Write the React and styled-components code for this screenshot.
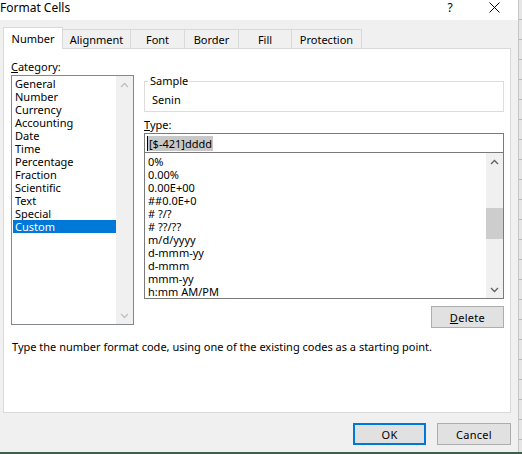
import React from 'react';
import styled, { createGlobalStyle } from 'styled-components';

const GlobalStyle = createGlobalStyle`
  html, body {
    margin: 0;
    padding: 0;
    background: #ffffff;
  }
  body {
    font-family: "Segoe UI", "Noto Sans", "Open Sans", sans-serif;
    font-size: 11px;
    color: #000000;
  }
`;

const Screen = styled.div`
  width: 522px;
  height: 454px;
  display: flex;
  flex-direction: column;
  overflow: hidden;
`;

const Main = styled.div`
  display: flex;
  flex: 1;
`;

const Dialog = styled.div`
  width: 518px;
  display: flex;
  flex-direction: column;
  background: #f0f0f0;
`;

const SheetEdge = styled.div`
  flex: 1;
  border-left: 1px solid #c6c6c6;
  background: repeating-linear-gradient(
    to bottom,
    #e6e6e6 0px,
    #e6e6e6 19px,
    #b9b9b9 19px,
    #b9b9b9 20px
  );
`;

const BottomStripe = styled.div`
  height: 2px;
  background: #3d5f4c;
`;

const TitleBar = styled.div`
  height: 20px;
  background: #ffffff;
  display: flex;
  align-items: flex-start;
`;

const Title = styled.span`
  font-size: 12px;
  line-height: 16px;
  flex: 1;
`;

const TitleButton = styled.span`
  width: ${(p) => p.$w}px;
  height: 15px;
  display: flex;
  justify-content: center;
  align-items: center;
  font-size: 12px;
`;

const TabRow = styled.div`
  height: 28px;
  display: flex;
  align-items: flex-end;
  padding-left: 3px;
`;

const Tab = styled.div`
  width: ${(p) => p.$w}px;
  height: ${(p) => (p.$active ? 22 : 19)}px;
  box-sizing: border-box;
  display: flex;
  align-items: center;
  justify-content: center;
  border: 1px solid #d9d9d9;
  border-bottom: none;
  border-left: ${(p) => (p.$first ? '1px solid #d9d9d9' : 'none')};
  background: ${(p) => (p.$active ? '#ffffff' : '#f0f0f0')};
  margin-bottom: ${(p) => (p.$active ? -1 : 0)}px;
  position: relative;
  z-index: ${(p) => (p.$active ? 1 : 0)};
  padding-top: ${(p) => (p.$active ? 0 : 1)}px;
`;

const Panel = styled.div`
  margin-left: 3px;
  width: 508px;
  height: 365px;
  box-sizing: border-box;
  background: #ffffff;
  border: 1px solid #d9d9d9;
  display: flex;
  flex-direction: column;
  padding: 10px 0 0 7px;
`;

const PanelColumns = styled.div`
  display: flex;
  gap: 10px;
`;

const LeftCol = styled.div`
  width: 123px;
  display: flex;
  flex-direction: column;
`;

const RightCol = styled.div`
  width: 360px;
  display: flex;
  flex-direction: column;
  padding-top: 22px;
`;

const Label = styled.div`
  height: 16px;
  line-height: 16px;
  margin-top: ${(p) => p.$top || 0}px;
  margin-bottom: ${(p) => p.$gap || 0}px;
`;

const Key = styled.span`
  text-decoration: underline;
`;

const ListBox = styled.div`
  height: ${(p) => p.$h}px;
  box-sizing: border-box;
  border: 1px solid ${(p) => p.$border || '#828790'};
  border-top: ${(p) => (p.$noTop ? 'none' : `1px solid ${p.$border || '#828790'}`)};
  background: #ffffff;
  display: flex;
`;

const ListItems = styled.div`
  flex: 1;
  padding: ${(p) => p.$top || 0}px 0 0 1px;
  display: flex;
  flex-direction: column;
`;

const ListItem = styled.div`
  height: 13px;
  line-height: 13px;
  padding-left: 2px;
  white-space: nowrap;
  background: ${(p) => (p.$selected ? '#0078d7' : 'transparent')};
  color: ${(p) => (p.$selected ? '#ffffff' : '#000000')};
`;

const ScrollBar = styled.div`
  width: 17px;
  background: #f0f0f0;
  display: flex;
  flex-direction: column;
`;

const ScrollArrow = styled.div`
  height: 17px;
  display: flex;
  align-items: center;
  justify-content: center;
  color: ${(p) => (p.$disabled ? '#bfbfbf' : '#606060')};
`;

const ScrollTrack = styled.div`
  flex: 1;
  display: flex;
  flex-direction: column;
`;

const ScrollThumb = styled.div`
  margin-top: ${(p) => p.$top}px;
  height: ${(p) => p.$h}px;
  background: #cdcdcd;
`;

const GroupBox = styled.div`
  height: 31px;
  box-sizing: border-box;
  border: 1px solid #dcdcdc;
  padding: 10px 0 0 7px;
  position: relative;
`;

const Legend = styled.span`
  position: absolute;
  top: -8px;
  left: 3px;
  padding: 0 1px 0 2px;
  background: #ffffff;
  line-height: 14px;
`;

const SampleText = styled.div`
  line-height: 16px;
`;

const TextInput = styled.div`
  height: 20px;
  box-sizing: border-box;
  border: 1px solid #7a7a7a;
  display: flex;
  align-items: center;
  padding-left: 2px;
`;

const Selection = styled.span`
  background: #c8c8c8;
  line-height: 15px;
  padding: 0 1px;
  border-left: 1px solid #000000;
`;

const ButtonRow = styled.div`
  display: flex;
  justify-content: flex-end;
  margin-top: ${(p) => p.$top || 0}px;
  gap: 11px;
`;

const Button = styled.div`
  width: ${(p) => p.$w || 73}px;
  height: 22px;
  box-sizing: border-box;
  border: ${(p) => (p.$default ? '2px solid #0078d7' : '1px solid #adadad')};
  background: #e1e1e1;
  display: flex;
  align-items: center;
  justify-content: center;
  letter-spacing: 0.3px;
`;

const Description = styled.div`
  margin-top: 11px;
  padding-left: 1px;
  line-height: 16px;
`;

const Footer = styled.div`
  flex: 1;
  display: flex;
  justify-content: flex-end;
  align-items: flex-start;
  padding: 10px 7px 0 0;
`;

const Chevron = ({ up }) => (
  <svg width="9" height="6" viewBox="0 0 9 6">
    <path
      d={up ? 'M1 5 L4.5 1.5 L8 5' : 'M1 1 L4.5 4.5 L8 1'}
      fill="none"
      stroke="currentColor"
      strokeWidth="1.3"
    />
  </svg>
);

const CloseIcon = () => (
  <svg width="11" height="11" viewBox="0 0 11 11">
    <path d="M0.5 0.5 L10.5 10.5 M10.5 0.5 L0.5 10.5" stroke="#000" strokeWidth="1" />
  </svg>
);

const categories = [
  'General', 'Number', 'Currency', 'Accounting', 'Date', 'Time',
  'Percentage', 'Fraction', 'Scientific', 'Text', 'Special', 'Custom',
];

const formats = [
  '0%', '0.00%', '0.00E+00', '##0.0E+0', '# ?/?', '# ??/??',
  'm/d/yyyy', 'd-mmm-yy', 'd-mmm', 'mmm-yy', 'h:mm AM/PM',
];

const tabs = [
  { label: 'Number', w: 60 },
  { label: 'Alignment', w: 68 },
  { label: 'Font', w: 54 },
  { label: 'Border', w: 54 },
  { label: 'Fill', w: 53 },
  { label: 'Protection', w: 70 },
];

const App = () => {
  return (
    <Screen>
      <GlobalStyle />
      <Main>
        <Dialog>
          <TitleBar>
            <Title>Format Cells</Title>
            <TitleButton $w={14}>?</TitleButton>
            <TitleButton $w={30} />
            <TitleButton $w={14}><CloseIcon /></TitleButton>
            <TitleButton $w={17} />
          </TitleBar>
          <TabRow>
            {tabs.map((t, i) => (
              <Tab key={t.label} $w={t.w} $active={i === 0} $first={i === 0}>
                {t.label}
              </Tab>
            ))}
          </TabRow>
          <Panel>
            <PanelColumns>
              <LeftCol>
                <Label><Key>C</Key>ategory:</Label>
                <ListBox $h={250}>
                  <ListItems $top={1}>
                    {categories.map((c) => (
                      <ListItem key={c} $selected={c === 'Custom'}>{c}</ListItem>
                    ))}
                  </ListItems>
                  <ScrollBar>
                    <ScrollArrow $disabled><Chevron up /></ScrollArrow>
                    <ScrollTrack />
                    <ScrollArrow $disabled><Chevron /></ScrollArrow>
                  </ScrollBar>
                </ListBox>
              </LeftCol>
              <RightCol>
                <GroupBox>
                  <Legend>Sample</Legend>
                  <SampleText>Senin</SampleText>
                </GroupBox>
                <Label $top={5}><Key>T</Key>ype:</Label>
                <TextInput>
                  <Selection>[$-421]dddd</Selection>
                </TextInput>
                <ListBox $h={146} $border="#7a7a7a" $noTop>
                  <ListItems $top={2}>
                    {formats.map((f) => (
                      <ListItem key={f}>{f}</ListItem>
                    ))}
                  </ListItems>
                  <ScrollBar>
                    <ScrollArrow><Chevron up /></ScrollArrow>
                    <ScrollTrack>
                      <ScrollThumb $top={38} $h={31} />
                    </ScrollTrack>
                    <ScrollArrow><Chevron /></ScrollArrow>
                  </ScrollBar>
                </ListBox>
                <ButtonRow $top={7}>
                  <Button $w={73}><Key>D</Key>elete</Button>
                </ButtonRow>
              </RightCol>
            </PanelColumns>
            <Description>
              Type the number format code, using one of the existing codes as a starting point.
            </Description>
          </Panel>
          <Footer>
            <ButtonRow>
              <Button $default $w={73}>OK</Button>
              <Button $w={74}>Cancel</Button>
            </ButtonRow>
          </Footer>
        </Dialog>
        <SheetEdge />
      </Main>
      <BottomStripe />
    </Screen>
  );
};

export default App;
